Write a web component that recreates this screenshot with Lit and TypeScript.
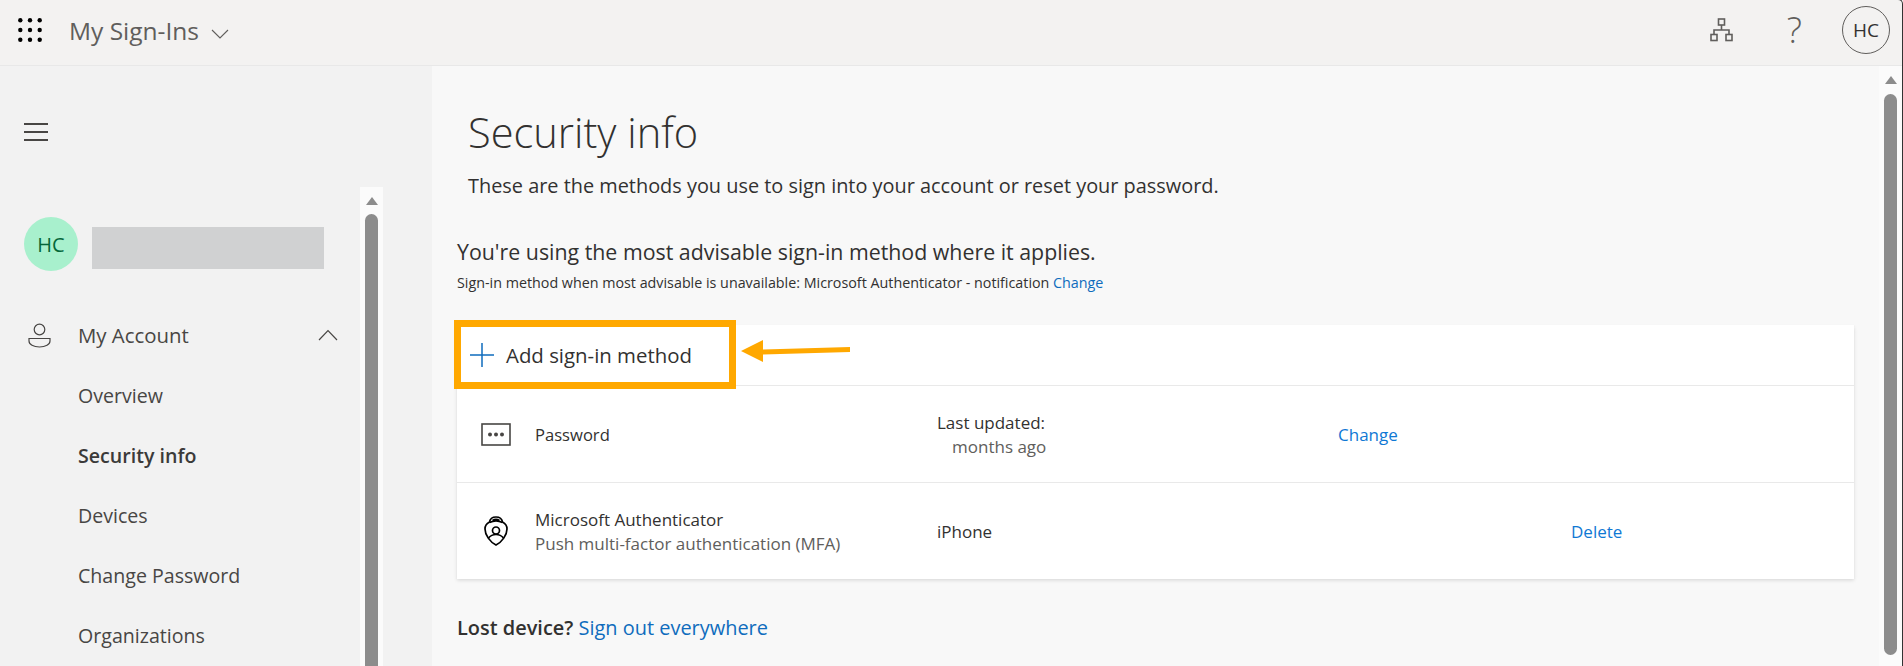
import { LitElement, html, css, svg } from 'lit';
import { customElement } from 'lit/decorators.js';

const navItems = ['Overview', 'Security info', 'Devices', 'Change Password', 'Organizations'];

@customElement('app-root')
export class AppRoot extends LitElement {
    static styles = css`
        :host {
            display: block;
            height: 666px;
            overflow: hidden;
            position: relative;
            font-family: 'Open Sans', 'Noto Sans', sans-serif;
            color: #323130;
            background: #f8f8f8;
        }
        a { color: #0f6cbd; text-decoration: none; }

        .topbar {
            height: 66px;
            box-sizing: border-box;
            background: #f3f2f1;
            border-bottom: 1px solid #e8e8e8;
            display: flex;
            align-items: center;
            padding: 0 13px 6px 18px;
        }
        .waffle { width: 24px; height: 24px; margin-right: 27px; display: block; }
        .app-name { font-size: 24.500px; font-weight: 500; color: #605e5c; margin-top: 2px; }
        .app-chevron { margin-left: 12px; margin-top: 9px; display: block; }
        .top-actions { margin-left: auto; display: flex; align-items: center; }
        .org-icon { display: block; margin-right: 53px; }
        .help { font-size: 36px; font-weight: 300; color: #605e5c; margin-right: 40px; line-height: 1; }
        .me {
            width: 48px; height: 48px; box-sizing: border-box;
            border: 1px solid #605e5c; border-radius: 50%;
            display: flex; align-items: center; justify-content: center;
            font-size: 19px; color: #323130;
        }

        .body { display: flex; height: 600px; }

        .sidebar { width: 432px; flex: none; background: #f2f2f2; display: flex; }
        .side-main { width: 360px; flex: none; box-sizing: border-box; padding-top: 57px; }
        .burger { display: block; margin-left: 24px; }
        .profile { display: flex; align-items: flex-start; margin: 76px 0 0 24px; }
        .avatar {
            width: 54px; height: 54px; border-radius: 50%;
            background: #a8f0cd; color: #04673a;
            display: flex; align-items: center; justify-content: center;
            font-size: 20px;
        }
        .redacted { width: 232px; height: 42px; background: #d0d1d2; margin: 10px 0 0 14px; }
        .account { display: flex; align-items: center; height: 60px; margin-top: 34px; padding-left: 28px; color: #484644; }
        .account-icon { display: block; margin-right: 27px; }
        .account span { font-size: 20.400px; width: 240px; }
        .nav { list-style: none; margin: 0; padding: 1px 0 0 78px; }
        .nav li { height: 60px; line-height: 60px; font-size: 19.600px; color: #484644; }
        .nav li.active { font-weight: 600; color: #3b3a39; }

        .side-scroll { width: 23px; flex: none; margin-top: 121px; background: #fbfbfb; position: relative; }
        .thumb { position: absolute; left: 5px; top: 27px; bottom: 0; width: 13px; border-radius: 7px 7px 0 0; background: #8c8c8c; }
        .arrow-up {
            position: absolute; left: 6px; top: 10px; width: 0; height: 0;
            border-left: 6px solid transparent; border-right: 6px solid transparent; border-bottom: 8px solid #8c8c8c;
        }

        .main { flex: 1; position: relative; background: #f8f8f8; }
        .content { padding: 40px 0 0 25px; width: 1397px; }
        h1 { margin: 0 0 0 11px; font-size: 41.600px; line-height: 52px; font-weight: 300; color: #323130; }
        .subtitle { margin: 15px 0 0 11px; font-size: 19.900px; line-height: 26px; }
        .advisable { margin-top: 39px; font-size: 21.350px; line-height: 28px; }
        .fallback { margin-top: 8px; font-size: 14.300px; line-height: 18px; }

        .card { margin-top: 33px; background: #fff; box-shadow: 0 1.6px 3.6px rgba(0,0,0,.13), 0 .3px .9px rgba(0,0,0,.1); }
        .add-row { height: 61px; box-sizing: border-box; display: flex; align-items: center; padding-left: 13px; border-bottom: 1px solid #e9e9e9; font-size: 20.400px; }
        .add-row svg { display: block; margin-right: 12px; }
        .method {
            display: grid;
            grid-template-columns: 78px 402px 401px 233px 1fr;
            align-items: center;
            height: 96px;
            font-size: 17px;
        }
        .method a { color: #0f78d4; }
        .method + .method { border-top: 1px solid #e9e9e9; }
        .method-icon { justify-self: center; display: block; }
        .password-label { font-size: 16.600px; }
        .sub { color: #605e5c; }
        .indent { padding-left: 15px; color: #605e5c; }
        .lines { line-height: 24px; padding-top: 1px; }

        .lost { margin-top: 35px; font-size: 19.950px; line-height: 28px; }
        .lost b { font-weight: 600; }

        .main-scroll { position: absolute; left: 1447px; top: 0; bottom: 0; width: 23px; background: #fbfbfb; }
        .main-scroll .thumb { top: 28px; bottom: 11px; border-radius: 7px; }

        .highlight {
            position: absolute; left: 22px; top: 254px; width: 282px; height: 69px;
            box-sizing: border-box; border: 7px solid #ffa800; pointer-events: none;
        }
        .pointer { position: absolute; left: 307px; top: 272px; display: block; }
        .edge {
            position: absolute; right: 0; top: -1px; bottom: 0; width: 4px;
            border-top: 1px solid #333; border-right: 1px solid #333; border-top-right-radius: 7px;
        }
    `;

    render() {
        return html`
            <div class="topbar">
                <svg class="waffle" viewBox="0 0 24 24" fill="#000">
                    ${[2.3, 12, 21.7].map((y) => [2.3, 12, 21.7].map((x) => svg`<circle cx=${x} cy=${y} r="2.2"></circle>`))}
                </svg>
                <span class="app-name">My Sign-Ins</span>
                <svg class="app-chevron" width="18" height="10" viewBox="0 0 18 10" fill="none" stroke="#605e5c" stroke-width="1.1"><path d="M1 1l8 8 8-8"></path></svg>
                <div class="top-actions">
                    <svg class="org-icon" width="24" height="24" viewBox="0 0 24 24" fill="none" stroke="#605e5c" stroke-width="1.6">
                        <rect x="8.500" y="1" width="6" height="6"></rect>
                        <rect x="1" y="16.500" width="6" height="6"></rect>
                        <rect x="16" y="16.500" width="6" height="6"></rect>
                        <path d="M11.500 7v5M4 16.500V12h15v4.500"></path>
                    </svg>
                    <span class="help">?</span>
                    <div class="me">HC</div>
                </div>
            </div>
            <div class="body">
                <aside class="sidebar">
                    <div class="side-main">
                        <svg class="burger" width="24" height="18" viewBox="0 0 24 18" fill="none" stroke="#484644" stroke-width="2"><path d="M0 1h24M0 9h24M0 17h24"></path></svg>
                        <div class="profile">
                            <div class="avatar">HC</div>
                            <div class="redacted"></div>
                        </div>
                        <div class="account">
                            <svg class="account-icon" width="23" height="25" viewBox="0 0 23 25" fill="none" stroke="#484644" stroke-width="1.2">
                                <circle cx="11.500" cy="6.500" r="5.300"></circle>
                                <path d="M1 15.500h21v2.500c0 3.500-4.500 6-10.500 6S1 21.500 1 18z"></path>
                            </svg>
                            <span>My Account</span>
                            <svg width="20" height="12" viewBox="0 0 20 12" fill="none" stroke="#484644" stroke-width="1.2"><path d="M1 11l9-9.500 9 9.500"></path></svg>
                        </div>
                        <ul class="nav">
                            ${navItems.map((item) => html`<li class=${item === 'Security info' ? 'active' : ''}>${item}</li>`)}
                        </ul>
                    </div>
                    <div class="side-scroll"><div class="arrow-up"></div><div class="thumb"></div></div>
                </aside>
                <main class="main">
                    <div class="content">
                        <h1>Security info</h1>
                        <div class="subtitle">These are the methods you use to sign into your account or reset your password.</div>
                        <div class="advisable">You're using the most advisable sign-in method where it applies.</div>
                        <div class="fallback">Sign-in method when most advisable is unavailable: Microsoft Authenticator - notification <a href="#">Change</a></div>
                        <div class="card">
                            <div class="add-row">
                                <svg width="24" height="24" viewBox="0 0 24 24" fill="none" stroke="#0f6cbd" stroke-width="1.5"><path d="M12 0v24M0 12h24"></path></svg>
                                Add sign-in method
                            </div>
                            <div class="method">
                                <svg class="method-icon" width="30" height="23" viewBox="0 0 30 23" fill="#484644">
                                    <rect x="1" y="1" width="28" height="21" fill="none" stroke="#484644" stroke-width="1.6"></rect>
                                    <circle cx="9" cy="11.500" r="2"></circle><circle cx="15" cy="11.500" r="2"></circle><circle cx="21" cy="11.500" r="2"></circle>
                                </svg>
                                <div class="password-label">Password</div>
                                <div class="lines"><div>Last updated:</div><div class="indent">months ago</div></div>
                                <a href="#">Change</a>
                                <span></span>
                            </div>
                            <div class="method">
                                <svg class="method-icon" width="24" height="30" viewBox="0 0 24 30" fill="none" stroke="#000" stroke-width="1.7">
                                    <path d="M12 1C8.500 1 6 3 5.500 6 2.500 7.500 1 10 1 13c0 6 5 13 11 16 6-3 11-10 11-16 0-3-1.500-5.500-4.500-7C18 3 15.500 1 12 1z"></path>
                                    <path d="M5.500 6.500c4-2 9-2 13 0M8.500 4.500c2-1.200 5-1.200 7 0"></path>
                                    <circle cx="12" cy="14.500" r="3.500"></circle>
                                    <path d="M4.500 22c2-2.500 4.500-3.500 7.500-3.500s5.500 1 7.500 3.500"></path>
                                </svg>
                                <div class="lines"><div>Microsoft Authenticator</div><div class="sub">Push multi-factor authentication (MFA)</div></div>
                                <div>iPhone</div>
                                <span></span>
                                <a href="#">Delete</a>
                            </div>
                        </div>
                        <div class="lost"><b>Lost device?</b> <a href="#">Sign out everywhere</a></div>
                    </div>
                    <div class="main-scroll"><div class="arrow-up"></div><div class="thumb"></div></div>
                    <div class="highlight"></div>
                    <svg class="pointer" width="112" height="26" viewBox="0 0 112 26" fill="#ffa800">
                        <path d="M2 13L24 2v9.500L111 9v5l-87 2.500V24z"></path>
                    </svg>
                </main>
            </div>
            <div class="edge"></div>
        `;
    }
}
